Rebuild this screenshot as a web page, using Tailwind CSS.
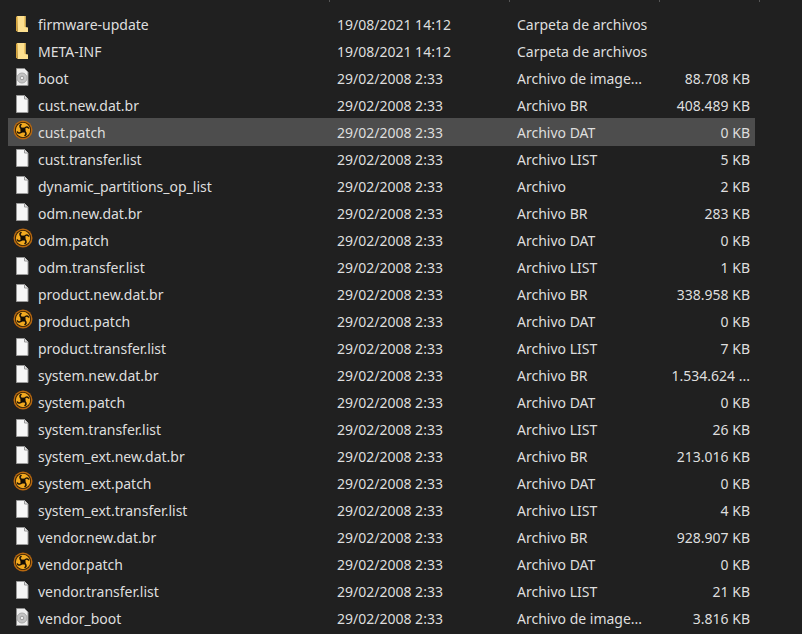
<!DOCTYPE html>
<html lang="en">
  <head>
    <meta charset="UTF-8" />
    <title>Files</title>
    <script src="https://cdn.jsdelivr.net/npm/@tailwindcss/browser@4"></script>
  </head>
  <body class="bg-[#202020] w-[802px] h-[634px] overflow-hidden relative font-['Noto_Sans','Open_Sans',sans-serif] text-[14px] text-[#dedede]">
    <!-- column header separators, cut off at the top of the crop -->
    <div class="absolute top-0 left-[329px] w-px h-[2px] bg-[#555]"></div>
    <div class="absolute top-0 left-[509px] w-px h-[2px] bg-[#555]"></div>
    <div class="absolute top-0 left-[659px] w-px h-[2px] bg-[#555]"></div>
    <div class="absolute top-0 left-[759px] w-px h-[2px] bg-[#555]"></div>

    <svg class="hidden">
      <symbol id="folder" viewBox="0 0 16 18">
        <path d="M3 1H11.500V12L14 12.500V17H3.500z" fill="#fde08f" />
        <path d="M2 1.500H3.500V17L2 15.500z" fill="#d9a63c" />
        <path d="M10 1H11.500V12.500L10 11.500z" fill="#efc561" />
      </symbol>
      <symbol id="file" viewBox="0 0 16 18">
        <path d="M2.500 .5h8l3.500 3.500v13.500H2.500z" fill="#f7f7f7" stroke="#9a9a9a" />
        <path d="M10.500 .5v3.500H14" fill="#e4e4e4" stroke="#9a9a9a" />
      </symbol>
      <symbol id="disc" viewBox="0 0 16 18">
        <path d="M2.500 .5h8l3.500 3.500v13.500H2.500z" fill="#efefef" stroke="#8f8f8f" />
        <circle cx="8" cy="10" r="5" fill="#c4c4c4" stroke="#a8a8a8" />
        <circle cx="8" cy="10" r="1.800" fill="#efefef" stroke="#8a8a8a" stroke-width=".8" />
      </symbol>
      <symbol id="shutter" viewBox="0 0 20 20">
        <circle cx="10" cy="10" r="9.500" fill="#b8680f" />
        <circle cx="10" cy="10" r="8" fill="#2c1b06" />
        <circle cx="10" cy="10" r="7.200" fill="#f2aa20" />
        <g fill="none" stroke="#17100a" stroke-width="1.600" stroke-linecap="round">
          <path d="M10 10C12 7 14.500 6 15.500 8" />
          <path d="M10 10C12 7 14.500 6 15.500 8" transform="rotate(90 10 10)" />
          <path d="M10 10C12 7 14.500 6 15.500 8" transform="rotate(180 10 10)" />
          <path d="M10 10C12 7 14.500 6 15.500 8" transform="rotate(270 10 10)" />
        </g>
        <circle cx="10" cy="10" r="2.600" fill="#120c04" />
      </symbol>
    </svg>

    <div id="rows" class="pt-[11px] pl-2 w-[755px]"></div>

    <script>
      const DATE = "29/02/2008 2:33";
      const files = [
        ["folder", "firmware-update", "19/08/2021 14:12", "Carpeta de archivos", ""],
        ["folder", "META-INF", "19/08/2021 14:12", "Carpeta de archivos", ""],
        ["disc", "boot", DATE, "Archivo de image...", "88.708 KB"],
        ["file", "cust.new.dat.br", DATE, "Archivo BR", "408.489 KB"],
        ["shutter", "cust.patch", DATE, "Archivo DAT", "0 KB"],
        ["file", "cust.transfer.list", DATE, "Archivo LIST", "5 KB"],
        ["file", "dynamic_partitions_op_list", DATE, "Archivo", "2 KB"],
        ["file", "odm.new.dat.br", DATE, "Archivo BR", "283 KB"],
        ["shutter", "odm.patch", DATE, "Archivo DAT", "0 KB"],
        ["file", "odm.transfer.list", DATE, "Archivo LIST", "1 KB"],
        ["file", "product.new.dat.br", DATE, "Archivo BR", "338.958 KB"],
        ["shutter", "product.patch", DATE, "Archivo DAT", "0 KB"],
        ["file", "product.transfer.list", DATE, "Archivo LIST", "7 KB"],
        ["file", "system.new.dat.br", DATE, "Archivo BR", "1.534.624 ..."],
        ["shutter", "system.patch", DATE, "Archivo DAT", "0 KB"],
        ["file", "system.transfer.list", DATE, "Archivo LIST", "26 KB"],
        ["file", "system_ext.new.dat.br", DATE, "Archivo BR", "213.016 KB"],
        ["shutter", "system_ext.patch", DATE, "Archivo DAT", "0 KB"],
        ["file", "system_ext.transfer.list", DATE, "Archivo LIST", "4 KB"],
        ["file", "vendor.new.dat.br", DATE, "Archivo BR", "928.907 KB"],
        ["shutter", "vendor.patch", DATE, "Archivo DAT", "0 KB"],
        ["file", "vendor.transfer.list", DATE, "Archivo LIST", "21 KB"],
        ["disc", "vendor_boot", DATE, "Archivo de image...", "3.816 KB"],
      ];

      const iconClass = {
        folder: "w-4 h-[18px] ml-[6px] mr-2 -mt-[2px]",
        file: "w-4 h-[18px] ml-[6px] mr-2 -mt-[3px]",
        disc: "w-4 h-[18px] ml-[6px] mr-2 -mt-[3px]",
        shutter: "w-5 h-5 ml-[5px] mr-[5px] -mt-[6px]",
      };

      document.getElementById("rows").innerHTML = files
        .map(([icon, name, date, type, size]) => {
          const selected = name === "cust.patch";
          return `<div class="flex items-center h-[27px] ${selected ? "bg-[#4d4d4d] shadow-[0_-1px_0_#4d4d4d]" : ""}">
            <div class="w-[329px] flex items-center shrink-0">
              <svg class="${iconClass[icon]} shrink-0"><use href="#${icon}"></use></svg>
              <span>${name}</span>
            </div>
            <div class="w-[180px] shrink-0">${date}</div>
            <div class="w-[150px] shrink-0">${type}</div>
            <div class="w-[83px] text-right shrink-0 whitespace-nowrap">${size}</div>
          </div>`;
        })
        .join("");
    </script>
  </body>
</html>
